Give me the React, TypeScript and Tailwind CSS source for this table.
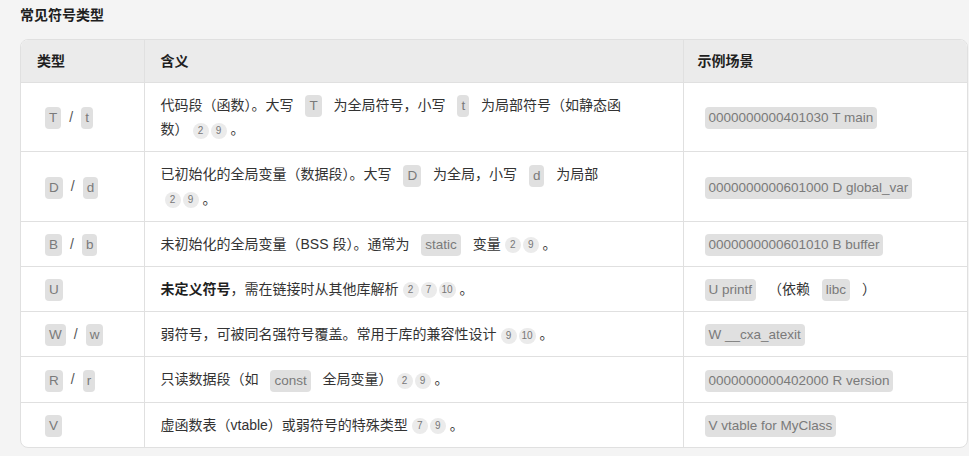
import type { ReactNode } from 'react';

function Code({ children }: { children: ReactNode }) {
  return (
    <code className="mx-2 inline-block rounded-[4px] bg-[#e0e0e0] px-1 align-middle font-['Liberation_Sans',sans-serif] text-[13.5px] leading-[22px] text-[#7a7a7a]">
      {children}
    </code>
  );
}

function Refs({ nums }: { nums: string[] }) {
  return (
    <span className="whitespace-nowrap">
      <span className="ml-1 inline-flex gap-[2px] align-middle">
        {nums.map((n) => (
          <span
            key={n}
            className="inline-flex h-4 min-w-4 items-center justify-center rounded-full bg-[#ebebeb] px-[3px] text-[10px] leading-none text-[#777]"
          >
            {n}
          </span>
        ))}
      </span>
      {' 。'}
    </span>
  );
}

function Slash() {
  return <span className="text-[#555]">/</span>;
}

type Row = { type: ReactNode; meaning: ReactNode; example: ReactNode };

const rows: Row[] = [
  {
    type: (
      <>
        <Code>T</Code>
        <Slash />
        <Code>t</Code>
      </>
    ),
    meaning: (
      <>
        代码段（函数）。大写 <Code>T</Code> 为全局符号，小写 <Code>t</Code> 为局部符号（如静态函数）
        <Refs nums={['2', '9']} />
      </>
    ),
    example: <Code>0000000000401030 T main</Code>,
  },
  {
    type: (
      <>
        <Code>D</Code>
        <Slash />
        <Code>d</Code>
      </>
    ),
    meaning: (
      <>
        已初始化的全局变量（数据段）。大写 <Code>D</Code> 为全局，小写 <Code>d</Code> 为局部
        <Refs nums={['2', '9']} />
      </>
    ),
    example: <Code>0000000000601000 D global_var</Code>,
  },
  {
    type: (
      <>
        <Code>B</Code>
        <Slash />
        <Code>b</Code>
      </>
    ),
    meaning: (
      <>
        未初始化的全局变量（BSS 段）。通常为 <Code>static</Code> 变量
        <Refs nums={['2', '9']} />
      </>
    ),
    example: <Code>0000000000601010 B buffer</Code>,
  },
  {
    type: <Code>U</Code>,
    meaning: (
      <>
        <strong className="font-bold text-[#1f1f1f]">未定义符号</strong>，需在链接时从其他库解析
        <Refs nums={['2', '7', '10']} />
      </>
    ),
    example: (
      <>
        <Code>U printf</Code> （依赖 <Code>libc</Code> ）
      </>
    ),
  },
  {
    type: (
      <>
        <Code>W</Code>
        <Slash />
        <Code>w</Code>
      </>
    ),
    meaning: (
      <>
        弱符号，可被同名强符号覆盖。常用于库的兼容性设计
        <Refs nums={['9', '10']} />
      </>
    ),
    example: <Code>W __cxa_atexit</Code>,
  },
  {
    type: (
      <>
        <Code>R</Code>
        <Slash />
        <Code>r</Code>
      </>
    ),
    meaning: (
      <>
        只读数据段（如 <Code>const</Code> 全局变量）
        <Refs nums={['2', '9']} />
      </>
    ),
    example: <Code>0000000000402000 R version</Code>,
  },
  {
    type: <Code>V</Code>,
    meaning: (
      <>
        虚函数表（vtable）或弱符号的特殊类型
        <Refs nums={['7', '9']} />
      </>
    ),
    example: <Code>V vtable for MyClass</Code>,
  },
];

export default function App() {
  return (
    <div className="min-h-[456px] bg-[#f4f4f4] pt-[5px] font-['Liberation_Sans','Noto_Sans_CJK_SC',sans-serif] text-[14px] text-[#333]">
      <h2 className="ml-5 mb-[14px] text-[14px] font-bold leading-5 text-[#1f1f1f]">常见符号类型</h2>

      <div className="ml-5 w-[948px] overflow-hidden rounded-lg border border-[#e0e0e0] bg-white">
        <table className="w-full table-fixed border-collapse">
          <colgroup>
            <col className="w-[123px]" />
            <col className="w-[539px]" />
            <col />
          </colgroup>
          <thead>
            <tr className="bg-[#ebebeb]">
              <th className="border-b border-[#e0e0e0] px-4 py-[9px] text-left font-bold leading-6 text-[#1f1f1f]">类型</th>
              <th className="border-b border-l border-[#e0e0e0] px-4 py-[9px] text-left font-bold leading-6 text-[#1f1f1f]">含义</th>
              <th className="border-b border-l border-[#e0e0e0] py-[9px] pl-[14px] pr-4 text-left font-bold leading-6 text-[#1f1f1f]">示例场景</th>
            </tr>
          </thead>
          <tbody>
            {rows.map((r, i) => (
              <tr key={i} className={i < rows.length - 1 ? 'border-b border-[#e0e0e0]' : ''}>
                <td className="whitespace-nowrap px-4 py-[10px] align-middle leading-6">{r.type}</td>
                <td className="border-l border-[#e0e0e0] px-4 py-[10px] align-middle leading-6">
                  <div className="max-w-[480px]">{r.meaning}</div>
                </td>
                <td className="whitespace-nowrap border-l border-[#e0e0e0] py-[10px] pl-[13px] pr-4 align-middle leading-6">
                  {r.example}
                </td>
              </tr>
            ))}
          </tbody>
        </table>
      </div>
    </div>
  );
}
